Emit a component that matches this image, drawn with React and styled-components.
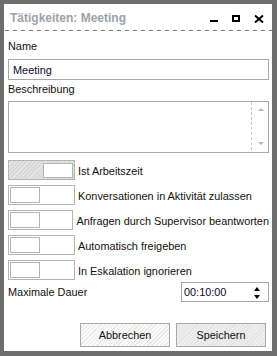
import React from "react";
import styled, { createGlobalStyle } from "styled-components";

const GlobalStyle = createGlobalStyle`
	html, body {
		margin: 0;
		padding: 0;
		background: #ffffff;
	}
	* {
		box-sizing: border-box;
	}
`;

const hatch = (base, line) =>
	`repeating-linear-gradient(135deg, ${base} 0px, ${base} 2px, ${line} 2px, ${line} 3px)`;

const Window = styled.div`
	width: 277px;
	height: 356px;
	border: 4px solid #6e6e6e;
	border-right-width: 5px;
	border-bottom-width: 5px;
	background: #ffffff;
	display: flex;
	flex-direction: column;
	font-family: "Liberation Sans", Arial, sans-serif;
	font-size: 10.9px;
	color: #111111;
`;

const Header = styled.div`
	height: 27px;
	display: flex;
	align-items: center;
	padding: 0 8px 0 6px;
	background-image: repeating-linear-gradient(
		to right,
		#7a7a7a 0px,
		#7a7a7a 4px,
		transparent 4px,
		transparent 8px
	);
	background-size: 100% 1px;
	background-repeat: no-repeat;
	background-position: 1px bottom;
`;

const Title = styled.div`
	flex: 1;
	font-weight: bold;
	font-size: 12px;
	color: #9ca2aa;
	padding-top: 1px;
`;

const Controls = styled.div`
	display: flex;
	align-items: center;
	gap: 14px;
	padding-top: 2px;
`;

const Minimize = styled.span`
	display: block;
	width: 8px;
	height: 7px;
	border-bottom: 2px solid #000;
`;

const Maximize = styled.span`
	display: block;
	width: 8px;
	height: 7px;
	border: 2px solid #000;
`;

const Body = styled.div`
	flex: 1;
	display: flex;
	flex-direction: column;
	padding: 8px 3px 4px 4px;
`;

const Label = styled.div`
	line-height: 14px;
	margin-top: ${(p) => p.$top || 0}px;
	margin-bottom: ${(p) => p.$bottom || 0}px;
`;

const TextInput = styled.div`
	height: 21px;
	border: 1px solid #a9a9a9;
	padding: 0 4px;
	display: flex;
	align-items: center;
	color: #0a0a2a;
`;

const TextArea = styled.div`
	height: 52px;
	border: 1px solid #a9a9a9;
	display: flex;
	justify-content: flex-end;
`;

const ScrollTrack = styled.div`
	width: 17px;
	display: flex;
	flex-direction: column;
	justify-content: space-between;
	align-items: center;
	padding: 6px 0 7px 3px;
	background-image: repeating-linear-gradient(
		to bottom,
		#c9c9c9 0px,
		#c9c9c9 3px,
		transparent 3px,
		transparent 5px
	);
	background-size: 1px 100%;
	background-repeat: no-repeat;
	background-position: 0 0;
`;

const Arrow = styled.span`
	width: 0;
	height: 0;
	border-left: ${(p) => p.$half || 3}px solid transparent;
	border-right: ${(p) => p.$half || 3}px solid transparent;
	${(p) =>
		p.$down
			? `border-top: ${p.$tall || 3}px solid ${p.$color};`
			: `border-bottom: ${p.$tall || 3}px solid ${p.$color};`}
`;

const ToggleList = styled.div`
	display: flex;
	flex-direction: column;
	gap: 5px;
	margin-top: 7px;
`;

const ToggleRow = styled.div`
	display: flex;
	align-items: center;
	gap: 3px;
`;

const Toggle = styled.div`
	width: 67px;
	height: 20px;
	border: 1px solid #b4b4b4;
	padding: 1px;
	display: flex;
	justify-content: ${(p) => (p.$on ? "flex-end" : "flex-start")};
	background: ${(p) => (p.$on ? hatch("#d9d9d9", "#e9e9e9") : "#ffffff")};
`;

const Knob = styled.div`
	width: 30px;
	height: 16px;
	border: 1px solid #b4b4b4;
	background: #ffffff;
	${(p) => (p.$on ? "margin: 1px 0 0 0; height: 15px;" : "")}
`;

const ToggleLabel = styled.span`
	line-height: 14px;
	padding-top: 2px;
	white-space: nowrap;
`;

const DurationRow = styled.div`
	display: flex;
	align-items: center;
	justify-content: space-between;
	margin-top: 2px;
`;

const TimeInput = styled.div`
	width: 88px;
	height: 20px;
	border: 1px solid #a9a9a9;
	display: flex;
	align-items: center;
	justify-content: space-between;
	padding: 0 8px 0 2px;
	color: #0a0a2a;
`;

const Spinner = styled.div`
	display: flex;
	flex-direction: column;
	gap: 4px;
	padding-top: 1px;
`;

const Footer = styled.div`
	margin-top: auto;
	display: flex;
	justify-content: flex-end;
	gap: 6px;
	padding-right: 3px;
`;

const Button = styled.div`
	width: 90px;
	height: 24px;
	border: 1px solid #a9a9a9;
	display: flex;
	align-items: center;
	justify-content: center;
	background: ${(p) =>
		p.$primary ? hatch("#ededed", "#e2e2e2") : hatch("#fafafa", "#e8e8e8")};
`;

const toggles = [
	{ label: "Ist Arbeitszeit", on: true },
	{ label: "Konversationen in Aktivität zulassen", on: false },
	{ label: "Anfragen durch Supervisor beantworten", on: false },
	{ label: "Automatisch freigeben", on: false },
	{ label: "In Eskalation ignorieren", on: false },
];

function CloseIcon() {
	return (
		<svg width="10" height="8" viewBox="0 0 10 8">
			<path d="M1 0.5 L9 7.5 M9 0.5 L1 7.5" stroke="#000" strokeWidth="2" />
		</svg>
	);
}

export default function App() {
	return (
		<>
			<GlobalStyle />
			<Window>
				<Header>
					<Title>Tätigkeiten: Meeting</Title>
					<Controls>
						<Minimize />
						<Maximize />
						<CloseIcon />
					</Controls>
				</Header>
				<Body>
					<Label $bottom={6}>Name</Label>
					<TextInput>Meeting</TextInput>
					<Label $top={2} $bottom={5}>
						Beschreibung
					</Label>
					<TextArea>
						<ScrollTrack>
							<Arrow $color="#b5b5b5" />
							<Arrow $down $color="#b5b5b5" />
						</ScrollTrack>
					</TextArea>
					<ToggleList>
						{toggles.map(({ label, on }) => (
							<ToggleRow key={label}>
								<Toggle $on={on}>
									<Knob $on={on} />
								</Toggle>
								<ToggleLabel>{label}</ToggleLabel>
							</ToggleRow>
						))}
					</ToggleList>
					<DurationRow>
						<span>Maximale Dauer</span>
						<TimeInput>
							<span>00:10:00</span>
							<Spinner>
								<Arrow $color="#000" $tall={4} />
								<Arrow $down $color="#000" $tall={4} />
							</Spinner>
						</TimeInput>
					</DurationRow>
					<Footer>
						<Button>Abbrechen</Button>
						<Button $primary>Speichern</Button>
					</Footer>
				</Body>
			</Window>
		</>
	);
}
